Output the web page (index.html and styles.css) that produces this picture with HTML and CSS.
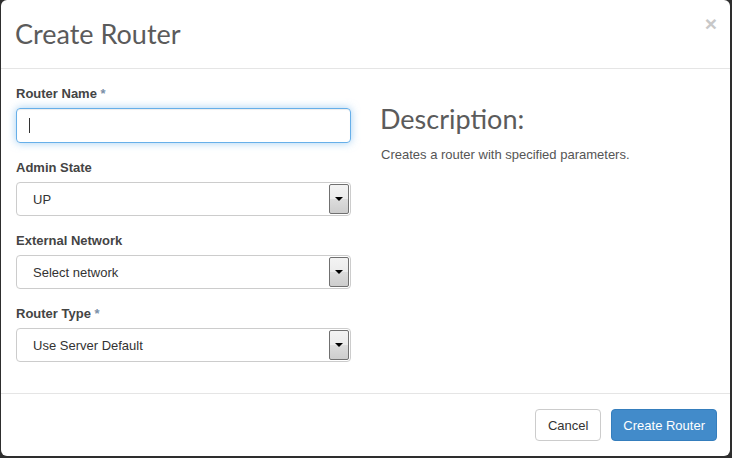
FILE: index.html
```html
<!DOCTYPE html>
<html>
<head>
<meta charset="utf-8">
<link rel="stylesheet" href="styles.css">
</head>
<body>
<div class="modal">
  <div class="modal-header">
    <h3 class="modal-title">Create Router</h3>
    <span class="close">&times;</span>
  </div>
  <div class="modal-body">
    <div class="form-col">
      <div class="form-group">
        <label class="label">Router Name <span class="req">*</span></label>
        <div class="input focus"><span class="caret"></span></div>
      </div>
      <div class="form-group">
        <label class="label">Admin State</label>
        <div class="select"><span class="select-text">UP</span><span class="arrow"><span class="tri"></span></span></div>
      </div>
      <div class="form-group">
        <label class="label">External Network</label>
        <div class="select"><span class="select-text">Select network</span><span class="arrow"><span class="tri"></span></span></div>
      </div>
      <div class="form-group">
        <label class="label">Router Type <span class="req">*</span></label>
        <div class="select"><span class="select-text">Use Server Default</span><span class="arrow"><span class="tri"></span></span></div>
      </div>
    </div>
    <div class="desc-col">
      <h3 class="desc-title">Description:</h3>
      <p class="desc-text">Creates a router with specified parameters.</p>
    </div>
  </div>
  <div class="modal-footer">
    <button class="btn btn-default">Cancel</button>
    <button class="btn btn-primary">Create Router</button>
  </div>
</div>
</body>
</html>
```

FILE: styles.css
```css
* { box-sizing: border-box; }
html, body { margin: 0; padding: 0; }
body {
  background: #2e2e2e;
  width: 732px;
  height: 458px;
  overflow: hidden;
  font-family: "Liberation Sans", Arial, sans-serif;
  font-size: 13px;
  color: #333;
}
.modal {
  margin-left: 1px;
  width: 729px;
  height: 456px;
  background: #fff;
  border-radius: 6px;
  display: flex;
  flex-direction: column;
}
.modal-header {
  height: 69px;
  border-bottom: 1px solid #e5e5e5;
  display: flex;
  justify-content: space-between;
  align-items: flex-start;
  padding: 0 13px 0 14px;
}
.modal-title {
  margin: 17px 0 0 0;
  font-family: Lato, "Open Sans", sans-serif;
  font-weight: 400;
  font-size: 27px;
  line-height: 34px;
  color: #5b5b5b;
}
.close {
  margin-top: 12px;
  font-family: "Liberation Sans", Arial, sans-serif;
  font-weight: bold;
  font-size: 21px;
  line-height: 24px;
  color: #c8c8c8;
}
.modal-body {
  flex: 1;
  display: flex;
  gap: 30px;
  padding: 16px 15px 0 15px;
}
.form-col { width: 335px; }
.form-group { margin-bottom: 16px; }
.label {
  display: block;
  font-weight: bold;
  font-size: 13px;
  line-height: 18px;
  margin-bottom: 5px;
  color: #444;
}
.req { color: #7a8fa8; font-weight: bold; }
.input {
  height: 35px;
  border: 1px solid #66afe9;
  border-radius: 4px;
  box-shadow: inset 0 1px 1px rgba(0,0,0,.075), 0 0 8px rgba(102,175,233,.6);
  display: flex;
  align-items: center;
  padding-left: 12px;
}
.caret {
  width: 1px;
  height: 15px;
  background: #333;
}
.select {
  height: 34px;
  border: 1px solid #ccc;
  border-radius: 4px;
  display: flex;
  align-items: center;
  padding: 1px 1px 1px 16px;
}
.select-text { flex: 1; font-size: 13px; color: #333; }
.arrow {
  width: 20px;
  align-self: stretch;
  border: 1px solid #707070;
  border-radius: 2px;
  background: linear-gradient(#f3f3f3 0%, #ebebeb 50%, #dcdcdc 51%, #cdcdcd 100%);
  display: flex;
  align-items: center;
  justify-content: center;
}
.tri {
  width: 0; height: 0;
  border-left: 4px solid transparent;
  border-right: 4px solid transparent;
  border-top: 4px solid #000;
}
.desc-col { flex: 1; }
.desc-title {
  margin: 17px 0 0 -1px;
  font-family: Lato, "Open Sans", sans-serif;
  font-weight: 400;
  font-size: 27px;
  line-height: 34px;
  color: #5b5b5b;
}
.desc-text {
  margin: 10px 0 0 0;
  font-size: 13px;
  line-height: 18px;
  color: #555;
}
.modal-footer {
  border-top: 1px solid #e5e5e5;
  display: flex;
  justify-content: flex-end;
  gap: 10px;
  padding: 15px 13px 15px 15px;
}
.btn {
  height: 32px;
  font-family: "Liberation Sans", Arial, sans-serif;
  font-size: 13px;
  padding: 0 12px;
  border-radius: 4px;
  border: 1px solid #ccc;
  background: #fff;
  color: #333;
}
.btn-primary {
  background: #428bca;
  border-color: #357ebd;
  color: #fff;
  padding: 0 11px;
}
```
